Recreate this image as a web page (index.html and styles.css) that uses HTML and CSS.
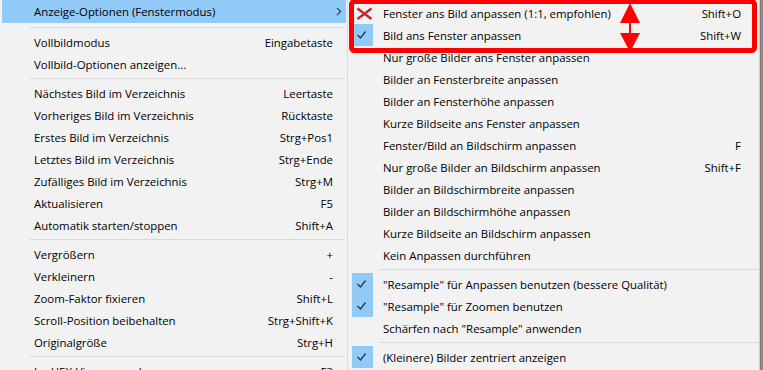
FILE: index.html
```html
<!DOCTYPE html>
<html lang="de">
<head>
<meta charset="utf-8">
<title>Anzeige-Optionen</title>
<link rel="stylesheet" href="styles.css">
</head>
<body>
<div class="screen">
  <div class="menu menu-main">
    <div class="item active"><span class="icon"></span><span class="label">Anzeige-Optionen (Fenstermodus)</span><span class="chev"><svg width="6" height="9" viewBox="0 0 6 9"><polyline points="1,0.8 4.6,4.5 1,8.2" fill="none" stroke="#333" stroke-width="1.1"/></svg></span></div>
    <div class="sep first"></div>
    <div class="item"><span class="icon"></span><span class="label">Vollbildmodus</span><span class="key">Eingabetaste</span></div>
    <div class="item"><span class="icon"></span><span class="label">Vollbild-Optionen anzeigen...</span></div>
    <div class="sep"></div>
    <div class="item"><span class="icon"></span><span class="label">Nächstes Bild im Verzeichnis</span><span class="key">Leertaste</span></div>
    <div class="item"><span class="icon"></span><span class="label">Vorheriges Bild im Verzeichnis</span><span class="key">Rücktaste</span></div>
    <div class="item"><span class="icon"></span><span class="label">Erstes Bild im Verzeichnis</span><span class="key">Strg+Pos1</span></div>
    <div class="item"><span class="icon"></span><span class="label">Letztes Bild im Verzeichnis</span><span class="key">Strg+Ende</span></div>
    <div class="item"><span class="icon"></span><span class="label">Zufälliges Bild im Verzeichnis</span><span class="key">Strg+M</span></div>
    <div class="item"><span class="icon"></span><span class="label">Aktualisieren</span><span class="key">F5</span></div>
    <div class="item"><span class="icon"></span><span class="label">Automatik starten/stoppen</span><span class="key">Shift+A</span></div>
    <div class="sep"></div>
    <div class="item"><span class="icon"></span><span class="label">Vergrößern</span><span class="key">+</span></div>
    <div class="item"><span class="icon"></span><span class="label">Verkleinern</span><span class="key">-</span></div>
    <div class="item"><span class="icon"></span><span class="label">Zoom-Faktor fixieren</span><span class="key">Shift+L</span></div>
    <div class="item"><span class="icon"></span><span class="label">Scroll-Position beibehalten</span><span class="key">Strg+Shift+K</span></div>
    <div class="item"><span class="icon"></span><span class="label">Originalgröße</span><span class="key">Strg+H</span></div>
    <div class="sep"></div>
    <div class="item"><span class="icon"></span><span class="label">Im HEX-Viewer anschauen</span><span class="key">F3</span></div>
  </div>

  <div class="menu menu-sub">
    <div class="item"><span class="icon"><svg width="21" height="22" viewBox="0 0 21 22"><path d="M5.5 6.5 L19.5 17 M19.5 6.5 L5.5 17" stroke="#cc2030" stroke-width="2.3" fill="none"/></svg></span><span class="label">Fenster ans Bild anpassen (1:1, empfohlen)</span><span class="key">Shift+O</span></div>
    <div class="item"><span class="icon checked"><svg width="21" height="22" viewBox="0 0 21 22"><path d="M5.5 11 L8.5 14 L13.5 7.5" stroke="#1f3a55" stroke-width="1.3" fill="none"/></svg></span><span class="label">Bild ans Fenster anpassen</span><span class="key">Shift+W</span></div>
    <div class="item"><span class="icon"></span><span class="label">Nur große Bilder ans Fenster anpassen</span></div>
    <div class="item"><span class="icon"></span><span class="label">Bilder an Fensterbreite anpassen</span></div>
    <div class="item"><span class="icon"></span><span class="label">Bilder an Fensterhöhe anpassen</span></div>
    <div class="item"><span class="icon"></span><span class="label">Kurze Bildseite ans Fenster anpassen</span></div>
    <div class="item"><span class="icon"></span><span class="label">Fenster/Bild an Bildschirm anpassen</span><span class="key">F</span></div>
    <div class="item"><span class="icon"></span><span class="label">Nur große Bilder an Bildschirm anpassen</span><span class="key">Shift+F</span></div>
    <div class="item"><span class="icon"></span><span class="label">Bilder an Bildschirmbreite anpassen</span></div>
    <div class="item"><span class="icon"></span><span class="label">Bilder an Bildschirmhöhe anpassen</span></div>
    <div class="item"><span class="icon"></span><span class="label">Kurze Bildseite an Bildschirm anpassen</span></div>
    <div class="item"><span class="icon"></span><span class="label">Kein Anpassen durchführen</span></div>
    <div class="sep"></div>
    <div class="item"><span class="icon checked"><svg width="21" height="22" viewBox="0 0 21 22"><path d="M5.5 11 L8.5 14 L13.5 7.5" stroke="#1f3a55" stroke-width="1.3" fill="none"/></svg></span><span class="label">"Resample" für Anpassen benutzen (bessere Qualität)</span></div>
    <div class="item"><span class="icon checked"><svg width="21" height="22" viewBox="0 0 21 22"><path d="M5.5 11 L8.5 14 L13.5 7.5" stroke="#1f3a55" stroke-width="1.3" fill="none"/></svg></span><span class="label">"Resample" für Zoomen benutzen</span></div>
    <div class="item"><span class="icon"></span><span class="label">Schärfen nach "Resample" anwenden</span></div>
    <div class="sep"></div>
    <div class="item"><span class="icon checked"><svg width="21" height="22" viewBox="0 0 21 22"><path d="M5.5 11 L8.5 14 L13.5 7.5" stroke="#1f3a55" stroke-width="1.3" fill="none"/></svg></span><span class="label">(Kleinere) Bilder zentriert anzeigen</span></div>
  </div>

  <div class="edge"></div>

  <svg class="annot" width="763" height="60" viewBox="0 0 763 60">
    <rect x="351.5" y="1.5" width="403" height="49" rx="3" fill="none" stroke="#f00" stroke-width="5"/>
    <polygon points="630,3 620,23 640,23" fill="#f00"/>
    <rect x="629" y="23" width="2" height="10" fill="#f00"/>
    <polygon points="620,33 640,33 630,52" fill="#f00"/>
  </svg>
</div>
</body>
</html>
```

FILE: styles.css
```css
html, body {
  margin: 0;
  padding: 0;
  background: #f2f2f2;
}

.screen {
  position: relative;
  display: flex;
  width: 763px;
  height: 370px;
  overflow: hidden;
  font-family: "Open Sans", "Noto Sans", sans-serif;
  font-size: 11.4px;
  color: #000;
}

.menu {
  display: flex;
  flex-direction: column;
  background: #f2f2f2;
  flex: none;
}

.menu-main {
  width: 347px;
  border-right: 1px solid #dadada;
}

.menu-sub {
  width: 410px;
  padding: 2px 0 0 1px;
  border-right: 1px solid #d0d0d0;
}

.item {
  display: flex;
  align-items: center;
  height: 22px;
  flex: none;
  white-space: nowrap;
}

.menu-main .item {
  margin: 0 1px 0 2px;
  padding: 0 13px 0 1px;
}

.menu-main .item.active {
  height: 23px;
  background: #91c9f7;
  padding-right: 4px;
}

.menu-sub .item {
  padding: 0 18px 0 3px;
}

.icon {
  width: 21px;
  height: 22px;
  margin-right: 10px;
  flex: none;
  display: flex;
}

.icon.checked {
  background: #91c9f7;
}

.label {
  flex: 1;
}

.key {
  flex: none;
}

.chev {
  display: flex;
  flex: none;
}

.sep {
  flex: none;
  height: 1px;
  background: #d7d7d7;
  margin: 3px 2px 3px 30px;
}

.sep.first {
  margin-top: 4px;
}

.menu-sub .sep {
  margin-left: 30px;
  margin-right: 0;
}

.edge {
  flex: 1;
  background: linear-gradient(to right, #8a7873, #9c8c86);
}

.annot {
  position: absolute;
  left: 0;
  top: 0;
}
```
